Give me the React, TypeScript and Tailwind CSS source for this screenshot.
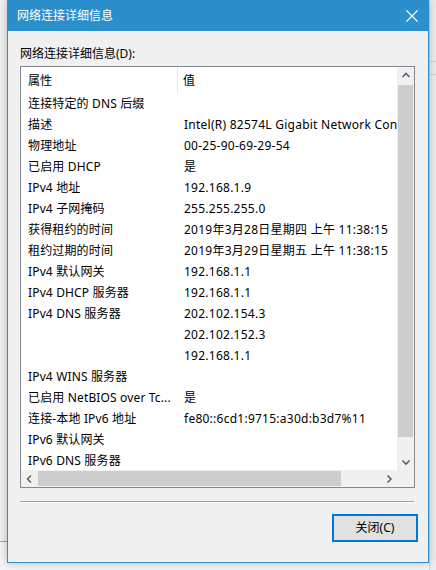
import React from "react";

const rows: [string, string][] = [
  ["连接特定的 DNS 后缀", ""],
  ["描述", "Intel(R) 82574L Gigabit Network Connection"],
  ["物理地址", "00-25-90-69-29-54"],
  ["已启用 DHCP", "是"],
  ["IPv4 地址", "192.168.1.9"],
  ["IPv4 子网掩码", "255.255.255.0"],
  ["获得租约的时间", "2019年3月28日星期四 上午 11:38:15"],
  ["租约过期的时间", "2019年3月29日星期五 上午 11:38:15"],
  ["IPv4 默认网关", "192.168.1.1"],
  ["IPv4 DHCP 服务器", "192.168.1.1"],
  ["IPv4 DNS 服务器", "202.102.154.3"],
  ["", "202.102.152.3"],
  ["", "192.168.1.1"],
  ["IPv4 WINS 服务器", ""],
  ["已启用 NetBIOS over Tc...", "是"],
  ["连接-本地 IPv6 地址", "fe80::6cd1:9715:a30d:b3d7%11"],
  ["IPv6 默认网关", ""],
  ["IPv6 DNS 服务器", ""],
];

function Chevron({ dir }: { dir: "up" | "down" | "left" | "right" }) {
  const d =
    dir === "up"
      ? "M1.5 6 L5 2.5 L8.5 6"
      : dir === "down"
      ? "M1.5 3.5 L5 7 L8.5 3.5"
      : dir === "left"
      ? "M6 1.5 L2.5 5 L6 8.5"
      : "M3.5 1.5 L7 5 L3.5 8.5";
  return (
    <svg width="10" height="10" viewBox="0 0 10 10">
      <path d={d} fill="none" stroke="#606060" strokeWidth="1.6" />
    </svg>
  );
}

export default function App() {
  return (
    <div
      className="relative w-[436px] h-[570px] overflow-hidden bg-[#f4f4f4] text-[12px] text-black"
      style={{ fontFamily: '"Noto Sans", "Noto Sans CJK SC", sans-serif' }}
    >
      {/* background window remnants */}
      <div className="absolute left-0 top-0 w-[7px] h-[542px] bg-[#f0f0f0] border-b border-[#a0a0a0]" />
      <div className="absolute right-0 top-0 w-[7px] h-[570px] bg-[#ececec] border-l border-[#c8d8e6]">
        <div className="h-[62px] border-b border-[#d4d4d4]" />
        <div className="h-[13px] border-b border-[#d4d4d4]" />
      </div>

      {/* dialog window */}
      <div className="absolute left-[7px] top-0 w-[422px] h-[563px] flex flex-col bg-[#f0f0f0] border-x border-b border-[#2b8fcc] shadow-[0_0_8px_rgba(0,0,0,0.25)]">
        {/* title bar */}
        <div className="h-[31px] shrink-0 bg-[#2b8fcc] flex items-center justify-between pl-[9px] pr-[8px]">
          <span className="text-white text-[12px] leading-none">网络连接详细信息</span>
          <svg width="14" height="14" viewBox="0 0 14 14" className="mr-[1px]">
            <path d="M1.5 1.5 L12.5 12.5 M12.5 1.5 L1.5 12.5" stroke="#ffffff" strokeWidth="1.2" />
          </svg>
        </div>

        {/* body */}
        <div className="flex flex-col pl-[12px] pr-[13px]">
          <div className="h-[35px] flex items-end pb-[6px] leading-none">网络连接详细信息(D):</div>

          {/* list box */}
          <div className="w-[395px] h-[422px] border border-[#828790] bg-white flex flex-col">
            <div className="flex h-[403px]">
              {/* content */}
              <div className="w-[376px] overflow-hidden flex flex-col">
                <div className="h-[26px] shrink-0 flex">
                  <div className="w-[157px] h-full flex items-center pl-[7px] pt-[1px] border-r border-[#e5e5e5]">属性</div>
                  <div className="flex-1 flex items-center pl-[5px] pt-[1px]">值</div>
                </div>
                {rows.map(([k, v], i) => (
                  <div key={i} className="h-[21px] shrink-0 flex items-center">
                    <div className="w-[157px] pl-[7px] pr-[2px] whitespace-nowrap overflow-hidden tracking-[0.15px]">{k}</div>
                    <div className="flex-1 pl-[6px] whitespace-nowrap overflow-hidden tracking-[0.25px]">{v}</div>
                  </div>
                ))}
              </div>
              {/* vertical scrollbar */}
              <div className="w-[17px] h-full bg-[#f0f0f0] flex flex-col">
                <div className="h-[18px] flex items-center justify-center">
                  <Chevron dir="up" />
                </div>
                <div className="flex-1 flex flex-col px-[1px]">
                  <div className="h-[352px] bg-[#cdcdcd]" />
                </div>
                <div className="h-[17px] flex items-center justify-center">
                  <Chevron dir="down" />
                </div>
              </div>
            </div>
            {/* horizontal scrollbar */}
            <div className="flex h-[17px]">
              <div className="w-[376px] h-full bg-[#f0f0f0] flex">
                <div className="w-[17px] flex items-center justify-center">
                  <Chevron dir="left" />
                </div>
                <div className="flex-1 flex py-[1px]">
                  <div className="w-[303px] bg-[#cdcdcd]" />
                </div>
                <div className="w-[17px] flex items-center justify-center">
                  <Chevron dir="right" />
                </div>
              </div>
              <div className="w-[17px] h-full bg-[#f0f0f0]" />
            </div>
          </div>

          {/* separator */}
          <div className="mt-[13px] w-[394px] h-[2px] border-t border-[#a0a0a0] border-b border-b-white" />

          {/* button row */}
          <div className="flex justify-end pt-[11px] pr-[0px]">
            <button className="w-[86px] h-[28px] bg-[#e1e1e1] border-2 border-[#0078d7] flex items-center justify-center text-[12px] leading-none -mr-[3px]">
              关闭(C)
            </button>
          </div>
        </div>
      </div>
    </div>
  );
}
